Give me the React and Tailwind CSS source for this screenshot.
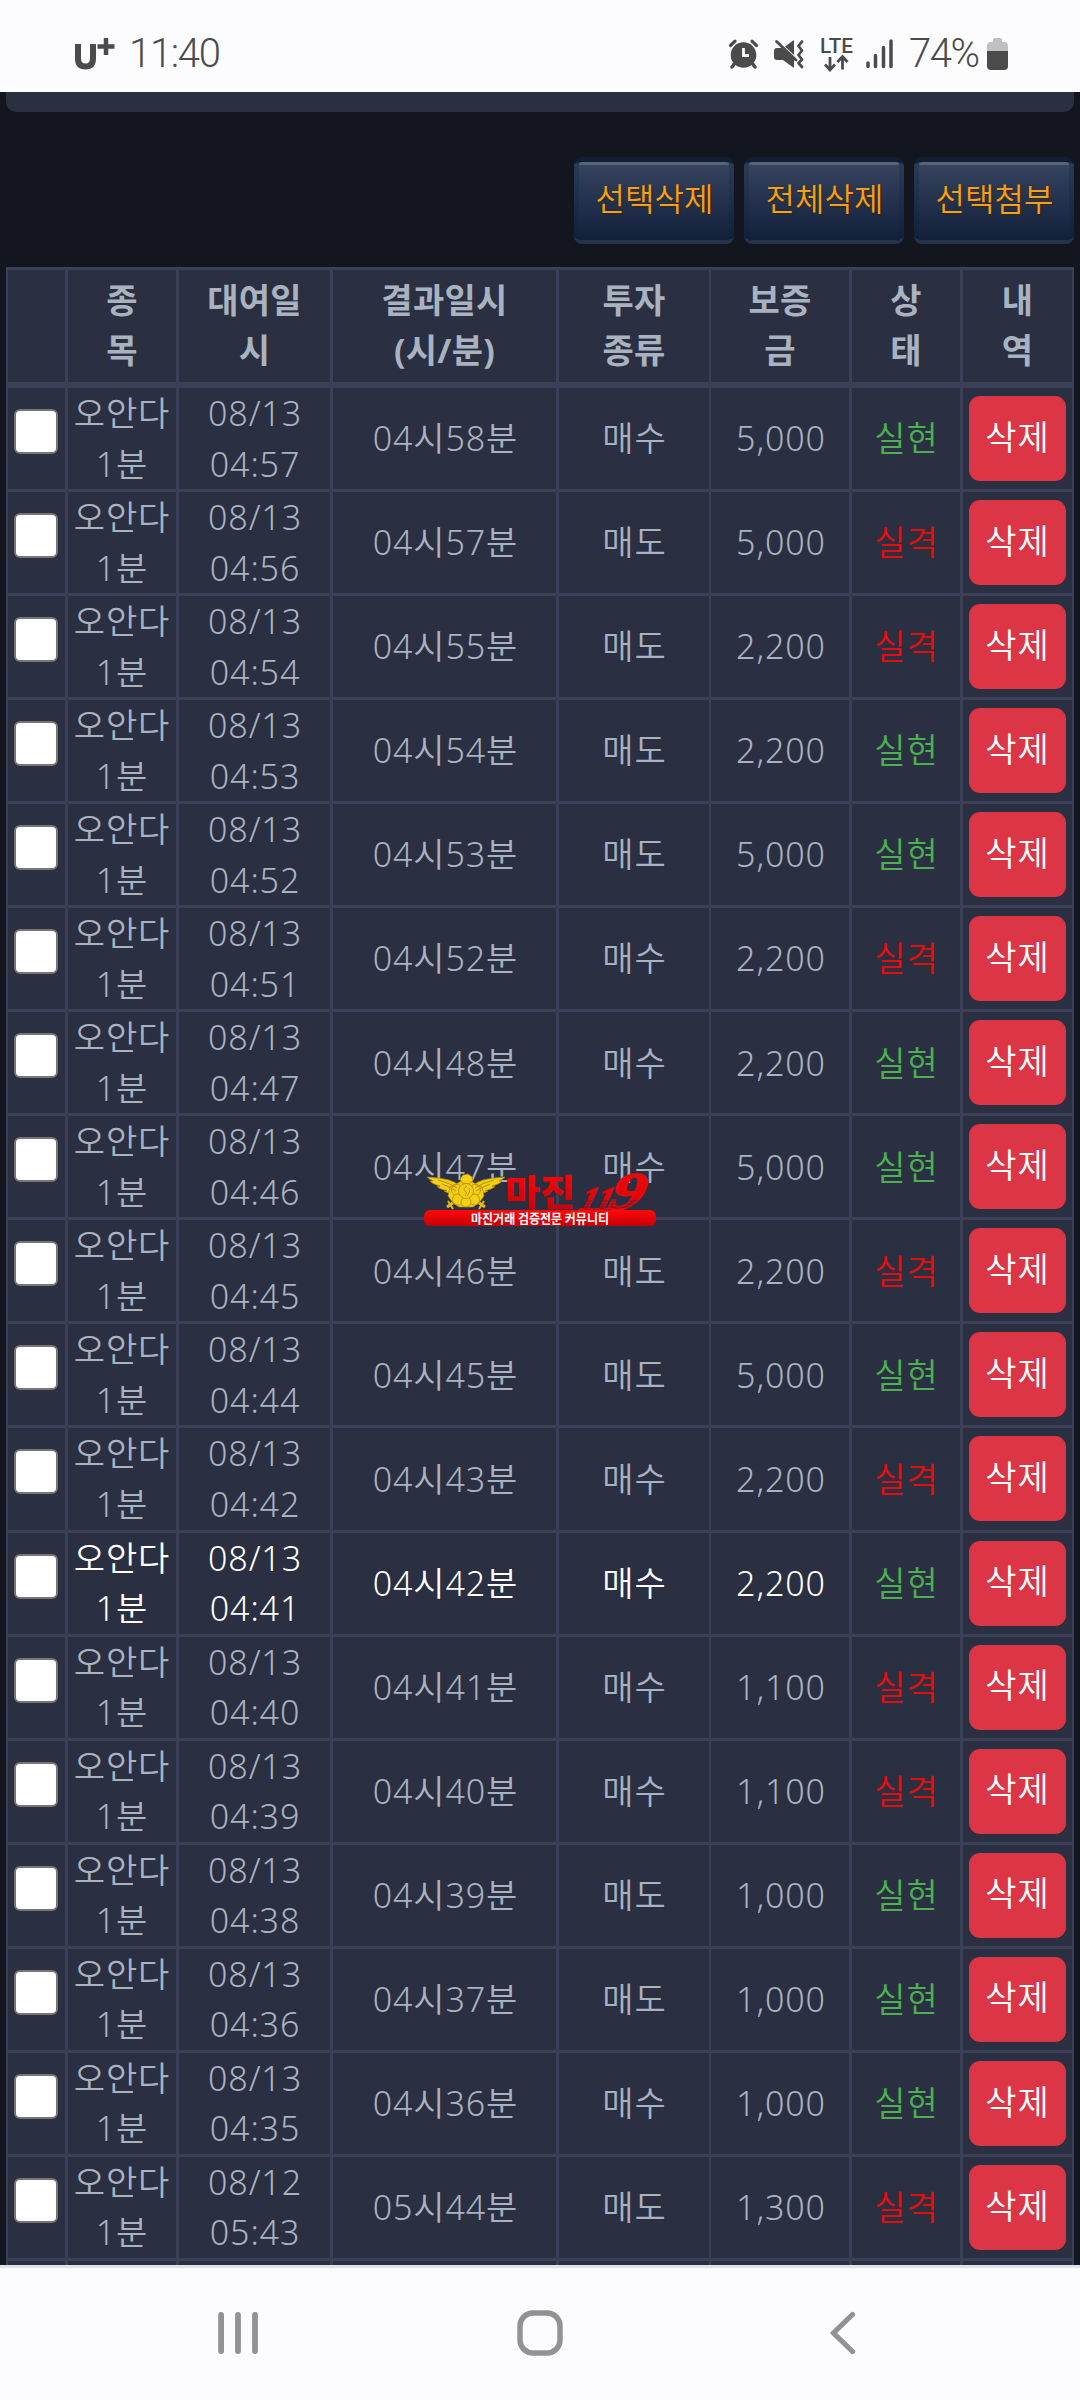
import React from "react";

const rows = [
  { date: "08/13", time: "04:57", result: "04시58분", type: "매수", amount: "5,000", win: true },
  { date: "08/13", time: "04:56", result: "04시57분", type: "매도", amount: "5,000", win: false },
  { date: "08/13", time: "04:54", result: "04시55분", type: "매도", amount: "2,200", win: false },
  { date: "08/13", time: "04:53", result: "04시54분", type: "매도", amount: "2,200", win: true },
  { date: "08/13", time: "04:52", result: "04시53분", type: "매도", amount: "5,000", win: true },
  { date: "08/13", time: "04:51", result: "04시52분", type: "매수", amount: "2,200", win: false },
  { date: "08/13", time: "04:47", result: "04시48분", type: "매수", amount: "2,200", win: true },
  { date: "08/13", time: "04:46", result: "04시47분", type: "매수", amount: "5,000", win: true },
  { date: "08/13", time: "04:45", result: "04시46분", type: "매도", amount: "2,200", win: false },
  { date: "08/13", time: "04:44", result: "04시45분", type: "매도", amount: "5,000", win: true },
  { date: "08/13", time: "04:42", result: "04시43분", type: "매수", amount: "2,200", win: false },
  { date: "08/13", time: "04:41", result: "04시42분", type: "매수", amount: "2,200", win: true, active: true },
  { date: "08/13", time: "04:40", result: "04시41분", type: "매수", amount: "1,100", win: false },
  { date: "08/13", time: "04:39", result: "04시40분", type: "매수", amount: "1,100", win: false },
  { date: "08/13", time: "04:38", result: "04시39분", type: "매도", amount: "1,000", win: true },
  { date: "08/13", time: "04:36", result: "04시37분", type: "매도", amount: "1,000", win: true },
  { date: "08/13", time: "04:35", result: "04시36분", type: "매수", amount: "1,000", win: true },
  { date: "08/12", time: "05:43", result: "05시44분", type: "매도", amount: "1,300", win: false },
];

const headers = [
  ["", ""],
  ["종", "목"],
  ["대여일", "시"],
  ["결과일시", "(시/분)"],
  ["투자", "종류"],
  ["보증", "금"],
  ["상", "태"],
  ["내", "역"],
];

const gridCols =
  "grid grid-cols-[60px_111px_154px_226px_152px_141px_111px_111px]";

const StatusBar = () => (
  <header className="flex h-[92px] shrink-0 items-center justify-between bg-[#fcfcff] pl-[74px] pr-[72px] pt-4 text-[#4b4b4b]">
    <div className="flex items-center">
      <svg width="42" height="36" viewBox="0 0 42 36" fill="none" stroke="#4b4b4b">
        <path d="M4 8v14.500q0 8 7.500 8t7.500-8V8" strokeWidth="6" />
        <path d="M32 2v17M23.500 10.500h17" strokeWidth="4.500" />
      </svg>
      <span className="ml-[13px] font-['Roboto',sans-serif] text-[40px] font-light leading-none tracking-[-1.300px]">
        11:40
      </span>
    </div>

    <div className="flex items-center">
      <svg width="180" height="38" viewBox="0 0 180 38" fill="none">
        {/* Alarm */}
        <g stroke="#4b4b4b" strokeLinecap="round">
          <circle cx="23.500" cy="20" r="12.800" fill="#4b4b4b" stroke="none" />
          <path d="M10.500 10.500L15 6.200M32 6.200l4.500 4.300" strokeWidth="3.200" />
          <path d="M15 28l-3 4M32 28l3 4" strokeWidth="3.500" />
          <path d="M23.500 13v7.500H29" stroke="#fcfcff" strokeWidth="2.800" strokeLinecap="butt" />
        </g>
        {/* Sound off with vibration */}
        <path d="M54 16q0-3 3-3h5l12 11v9L63 25h-6q-3 0-3-3z" fill="#4b4b4b" />
        <path d="M74 5v15l-9-8.500z" fill="#4b4b4b" />
        <path d="M56.500 6.500L76 25" stroke="#4b4b4b" strokeWidth="2.800" strokeLinecap="round" />
        <path d="M82 6.500l-3.500 4.500 3.500 4.500-3.500 4.500 3.500 4.500-3.500 3.500 3.500 4" stroke="#4b4b4b" strokeWidth="2.800" strokeLinecap="round" strokeLinejoin="round" />
        {/* LTE */}
        <text x="100" y="18" textLength="33" lengthAdjust="spacingAndGlyphs" fill="#4b4b4b" fontFamily="Roboto, sans-serif" fontWeight="500" fontSize="20">
          LTE
        </text>
        <path d="M110 22v13M105 29.500l5 5.500 5-5.500M122.500 34.500V22M117.500 27l5-5.500 5 5.500" stroke="#4b4b4b" strokeWidth="2.800" />
        {/* Signal */}
        <path d="M148 28v3.500M155.500 20.500v11M163.500 12.500v19M171 6v25.500" stroke="#4b4b4b" strokeWidth="3.500" strokeLinecap="round" />
      </svg>
      <span className="ml-[9px] w-[70px] whitespace-nowrap font-['Roboto',sans-serif] text-[40px] font-light leading-none tracking-[-1.500px]">
        74%
      </span>
      <svg width="21" height="34" viewBox="0 0 21 34" className="ml-[8px]">
        <path d="M6 2.500Q6 1 7.500 1h6Q15 1 15 2.500V5h2q4 0 4 4v5H0V9q0-4 4-4h2z" fill="#c0c0c2" />
        <path d="M0 14h21v15q0 4-4 4H4q-4 0-4-4z" fill="#4b4b4b" />
      </svg>
    </div>
  </header>
);

const ToolButton = ({ children }) => (
  <button className="h-[87px] w-40 overflow-hidden rounded-[8px] border-b-4 border-t-5 border-b-[#25334a] border-t-[#121e30] bg-linear-to-b from-[#2b3c57] to-[#11203a] px-[5px]">
    <span className="flex h-full items-center justify-center rounded-t-[3px] border-t-3 border-[#56647f] bg-linear-to-b from-[#35435f] to-[#13203a] pb-[8px] pl-[1px] text-[32px] font-[350] text-[#f5a01c] [text-shadow:1px_1px_1px_#3f2600]">
      {children}
    </span>
  </button>
);

const Cell = ({ children, className = "" }) => (
  <div
    className={`flex justify-center whitespace-nowrap border-r-3 border-[#3a4057] text-center nth-5:border-r-2 last:border-r-2 ${className}`}
  >
    {children}
  </div>
);

const Row = ({ row }) => (
  <div
    className={`${gridCols} h-[104.06px] border-b-3 border-[#3a4057] ${row.active ? "text-white" : ""}`}
  >
    <Cell className="items-start pr-[2px] pt-[21px]">
      <span className="h-[45px] w-11 rounded-[6px] border-[2.500px] border-[#767676] bg-white" />
    </Cell>
    <Cell className="items-center pb-[4px]">
      <span>
        오안다
        <br />
        1분
      </span>
    </Cell>
    <Cell className="items-center pb-[4px] pl-[1px]">
      <span>
        {row.date}
        <br />
        {row.time}
      </span>
    </Cell>
    <Cell className="items-center pb-[4px] pl-[2px]">{row.result}</Cell>
    <Cell className="items-center pb-[4px] pl-[1px]">{row.type}</Cell>
    <Cell className="items-center pb-[4px] pl-[2px]">{row.amount}</Cell>
    <Cell className={`items-center pb-[4px] pl-[1px] ${row.win ? "text-[#4caf50]" : "text-[#e60d0d]"}`}>
      {row.win ? "실현" : "실격"}
    </Cell>
    <Cell className="items-start pt-[8px]">
      <button className="h-[85px] w-[97px] rounded-[11px] bg-[#dc3545] pb-[3px] text-white">
        삭제
      </button>
    </Cell>
  </div>
);

const Watermark = () => (
  <svg
    className="absolute left-[424px] top-[1172px]"
    width="234"
    height="56"
    viewBox="0 0 234 56"
  >
    <defs>
      <linearGradient id="red" x1="0" y1="0" x2="0" y2="1">
        <stop offset="0" stopColor="#ff0a0a" />
        <stop offset="1" stopColor="#c40006" />
      </linearGradient>
      <linearGradient id="fade" x1="0" y1="0" x2="0" y2="1">
        <stop offset="0" stopColor="#f50808" />
        <stop offset="0.600" stopColor="#e00608" />
        <stop offset="1" stopColor="#7c1020" />
      </linearGradient>
    </defs>
    {/* Eagle emblem */}
    <g fill="#f3cf16" stroke="#a98208" strokeWidth="0.700" strokeLinejoin="round">
      <path d="M3 5q14 1 22 3 6 2 10 5l-3 9q-8 0-12-3l3-.500q-7-1-10-4l3-.300Q8 12 6 9l3-.200Q5 7.500 3 5z" />
      <path d="M81 5q-14 1-22 3-6 2-10 5l3 9q8 0 12-3l-3-.500q7-1 10-4l-3-.300q8-2.200 10-5.200l-3-.200q4-1.300 6-3.800z" />
      <path d="M23 35l13-9M61 35l-13-9" stroke="#e2bb12" strokeWidth="3" />
      <path d="M24 29l5 8M60 29l-5 8" stroke="#e2bb12" strokeWidth="2" />
      <path d="M42 6l8 5 8 4 2 9-5 7-6 4H35l-6-4-5-7 2-9 8-4z" />
      <path d="M36 7l3-4 5-1 4 3 1 4-5 3-6-1z" />
      <circle cx="33" cy="18" r="5.500" />
      <circle cx="51" cy="18" r="5.500" />
      <circle cx="34" cy="27.500" r="5.500" />
      <circle cx="50" cy="27.500" r="5.500" />
      <circle cx="42" cy="30" r="5" />
      <circle cx="42" cy="19" r="7.500" />
      <path d="M43 14q-5 3-2 5 3 2 0 5M45 16q2 4-2 8" fill="none" />
    </g>
    <path d="M14 8q12 3 19 8M18 12q8 3 14 7M70 8q-12 3-19 8M66 12q-8 3-14 7" fill="none" stroke="#a98208" strokeWidth="0.800" />
    <text x="81" y="33.500" textLength="70" lengthAdjust="spacingAndGlyphs" fill="url(#red)" fontFamily="'Noto Sans CJK KR', sans-serif" fontWeight="900" fontSize="36">
      마진
    </text>
    <g
      transform="translate(0 37) skewX(-16)"
      fill="url(#fade)"
      fontFamily="'Liberation Serif', serif"
      fontStyle="italic"
      fontWeight="700"
    >
      <text x="154" y="0.500" textLength="33" lengthAdjust="spacingAndGlyphs" fontSize="33" stroke="#d80810" strokeWidth="1.200">
        11
      </text>
      <text x="183" y="0" textLength="34" lengthAdjust="spacingAndGlyphs" fontSize="53" stroke="#e80a0c" strokeWidth="2">
        9
      </text>
    </g>
    <path d="M154 29h60M154 32h58M154 35h56" stroke="#2b2f42" strokeWidth="0.700" />
    <rect x="0" y="38" width="232" height="16" rx="6" fill="url(#red)" />
    <text x="47" y="51" textLength="138" lengthAdjust="spacingAndGlyphs" fill="#fff" fontFamily="'Noto Sans CJK KR', sans-serif" fontWeight="700" fontSize="13">
      마진거래 검증전문 커뮤니티
    </text>
  </svg>
);

const NavBar = () => (
  <nav className="flex h-[135px] shrink-0 items-center justify-between border-t-3 border-[#dce3e9] bg-[#fcfcff] pb-[2px] pl-[217px] pr-[224px]">
    <svg width="42" height="44" viewBox="0 0 42 44" stroke="#929292" strokeWidth="5.800" strokeLinecap="round">
      <path d="M4.100 4v36M21 4v36M38 4v36" />
    </svg>
    <svg width="46" height="46" viewBox="0 0 46 46" fill="none" stroke="#929292" strokeWidth="5.500" className="-ml-[8px]">
      <rect x="3" y="3" width="40" height="40" rx="13" />
    </svg>
    <svg width="27" height="44" viewBox="0 0 27 44" fill="none" stroke="#929292" strokeWidth="5.200" strokeLinecap="round">
      <path d="M23.500 3.500L4.500 22l19 18.500" />
    </svg>
  </nav>
);

const App = () => (
  <div className="relative flex h-[2400px] w-[1080px] flex-col overflow-hidden bg-[#13151f] font-['Noto_Sans','Noto_Sans_CJK_KR',sans-serif]">
    <StatusBar />

    <main className="min-h-0 flex-1 overflow-hidden">
      <div className="mx-1.5 h-5 rounded-b-[10px] bg-[#2b2f42]" />

      <div className="mr-1.5 mt-[45px] flex justify-end gap-2.5">
        <ToolButton>선택삭제</ToolButton>
        <ToolButton>전체삭제</ToolButton>
        <ToolButton>선택첨부</ToolButton>
      </div>

      <div className="mx-1.5 mt-[23px] border-l-2 border-t-3 border-[#3a4057] bg-[#2b2f42] text-[34px] font-[350] leading-[50.500px] tracking-[0.900px] text-[#a9b3c0]">
        <div className={`${gridCols} h-[118px] border-b-6 border-[#3a4057] font-bold tracking-[0.300px]`}>
          {headers.map(([first, second], i) => (
            <Cell key={i} className="items-center pb-[2px]">
              <span>
                {first}
                <br />
                {second}
              </span>
            </Cell>
          ))}
        </div>
        {rows.map((row) => (
          <Row key={row.time} row={row} />
        ))}
        {/* Top edge of the next row, cut by the nav bar */}
        <div className={`${gridCols} h-2`}>
          {headers.map((_, i) => (
            <Cell key={i} />
          ))}
        </div>
      </div>
    </main>

    <NavBar />
    <Watermark />
  </div>
);

export default App;
